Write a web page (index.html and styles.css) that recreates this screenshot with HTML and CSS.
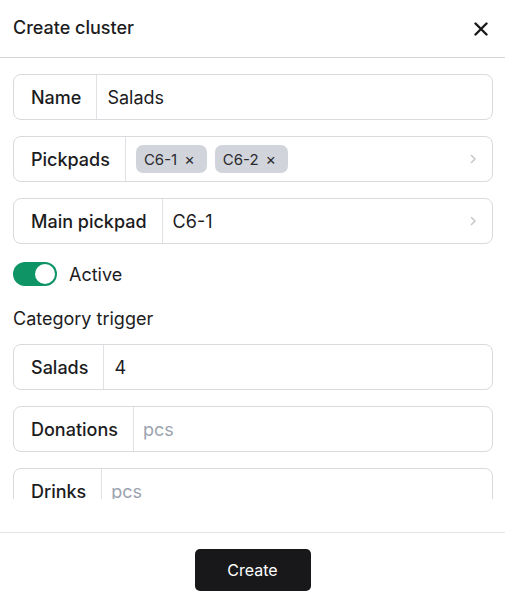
FILE: index.html
```html
<!doctype html>
<html lang="en">
  <head>
    <meta charset="UTF-8" />
    <meta name="viewport" content="width=device-width, initial-scale=1.0" />
    <title>Create cluster</title>
    <link rel="stylesheet" href="styles.css">
  </head>
  <body>
    <div class="modal">
      <div class="modal-header">
        <span class="modal-title">Create cluster</span>
        <button class="close-btn" title="Close">
          <svg width="14" height="14" viewBox="0 0 14 14">
            <path d="M1.5 1.5 L12.5 12.5 M12.5 1.5 L1.5 12.5" stroke="#1a1a1a" stroke-width="2.4" stroke-linecap="round" />
          </svg>
        </button>
      </div>

      <div class="modal-body">
        <div class="field">
          <div class="field-label">Name</div>
          <div class="field-value">Salads</div>
        </div>

        <div class="field">
          <div class="field-label">Pickpads</div>
          <div class="field-value chips">
            <span class="chip">C6-1 <span class="chip-x">×</span></span>
            <span class="chip">C6-2 <span class="chip-x">×</span></span>
          </div>
          <svg class="chevron" width="7" height="10" viewBox="0 0 7 10">
            <path d="M1.5 1.5 L5 5 L1.5 8.5" fill="none" stroke="#c8c8cc" stroke-width="1.6" stroke-linecap="round" stroke-linejoin="round" />
          </svg>
        </div>

        <div class="field">
          <div class="field-label">Main pickpad</div>
          <div class="field-value">C6-1</div>
          <svg class="chevron" width="7" height="10" viewBox="0 0 7 10">
            <path d="M1.5 1.5 L5 5 L1.5 8.5" fill="none" stroke="#c8c8cc" stroke-width="1.6" stroke-linecap="round" stroke-linejoin="round" />
          </svg>
        </div>

        <label class="toggle-row">
          <span class="toggle"><span class="knob"></span></span>
          <span>Active</span>
        </label>

        <div class="group">
          <div class="group-title">Category trigger</div>
          <div class="field">
            <div class="field-label">Salads</div>
            <div class="field-value">4</div>
          </div>
          <div class="field">
            <div class="field-label">Donations</div>
            <div class="field-value placeholder">pcs</div>
          </div>
          <div class="field">
            <div class="field-label">Drinks</div>
            <div class="field-value placeholder">pcs</div>
          </div>
        </div>
      </div>

      <div class="modal-footer">
        <button class="create-btn">Create</button>
      </div>
    </div>
  </body>
</html>
```

FILE: styles.css
```css
body {
  margin: 0;
  font-family: Inter, "Noto Sans", sans-serif;
  color: #1c1c1e;
  background: #fff;
}
.modal {
  width: 505px;
  height: 604px;
  display: flex;
  flex-direction: column;
}
.modal-header {
  height: 57px;
  flex-shrink: 0;
  display: flex;
  align-items: center;
  justify-content: space-between;
  padding: 0 17px 0 13px;
  border-bottom: 1px solid #d4d4d8;
}
.modal-title {
  font-size: 18px;
  font-weight: 500;
  margin-top: -3px;
}
.close-btn {
  border: none;
  background: none;
  padding: 0;
  display: flex;
  cursor: pointer;
}
.modal-body {
  height: 441px;
  flex-shrink: 0;
  box-sizing: border-box;
  overflow: hidden;
  padding: 16px 12px 0 13px;
  display: flex;
  flex-direction: column;
  gap: 16px;
}
.modal-body > * {
  flex-shrink: 0;
}
.field {
  flex-shrink: 0;
  height: 46px;
  box-sizing: border-box;
  border: 1px solid #d9d9de;
  border-radius: 8px;
  display: flex;
  align-items: center;
  font-size: 18px;
}
.field-label {
  height: 100%;
  display: flex;
  align-items: center;
  padding: 0 15px 0 17px;
  border-right: 1px solid #e2e2e6;
  font-weight: 500;
}
.field-value {
  flex: 1;
  padding-left: 10px;
}
.placeholder {
  color: #9ca3af;
  padding-left: 9px;
}
.chips {
  display: flex;
  gap: 8px;
}
.chip {
  height: 28px;
  display: inline-flex;
  align-items: center;
  padding: 0 12px 0 8px;
  background: #d1d5db;
  border-radius: 7px;
  font-size: 15px;
  color: #2a2a2e;
}
.chip-x {
  margin-left: 7px;
  font-size: 16px;
}
.chevron {
  margin-right: 15px;
}
.toggle-row {
  display: flex;
  align-items: center;
  gap: 12px;
  height: 28px;
  font-size: 18px;
}
.toggle {
  width: 44px;
  height: 24px;
  border-radius: 12px;
  background: #0f9565;
  display: flex;
  align-items: center;
  justify-content: flex-end;
  padding: 0 2px;
  box-sizing: border-box;
}
.knob {
  width: 20px;
  height: 20px;
  border-radius: 50%;
  background: #fff;
}
.group {
  display: flex;
  flex-direction: column;
  gap: 16px;
}
.group-title {
  font-size: 18px;
  line-height: 24px;
  margin-top: 3px;
  margin-bottom: -3px;
}
.modal-footer {
  margin-top: 33px;
  border-top: 1px solid #e4e4e7;
  display: flex;
  justify-content: center;
  padding-top: 16px;
}
.create-btn {
  width: 116px;
  height: 42px;
  border: none;
  border-radius: 5px;
  background: #18181a;
  color: #fff;
  font-family: Inter, "Noto Sans", sans-serif;
  font-size: 16px;
  cursor: pointer;
}
```
